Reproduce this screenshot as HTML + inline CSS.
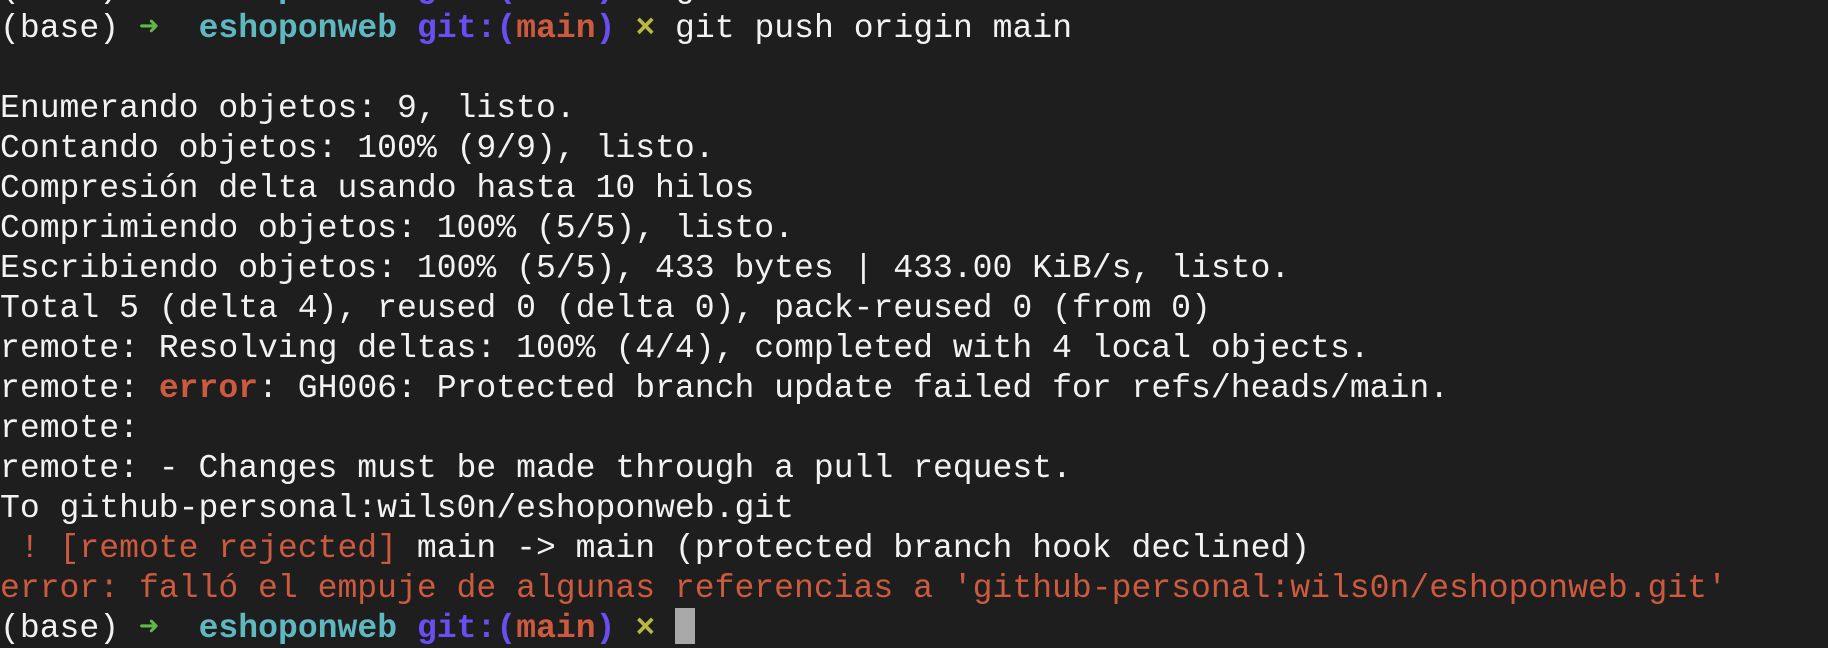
<!DOCTYPE html>
<html><head><meta charset="utf-8"><style>
html,body{margin:0;padding:0;background:#1e1e1e;width:1828px;height:620px;overflow:hidden}
pre{margin:0;position:absolute;left:0;top:-32px;font-family:"Liberation Mono","DejaVu Sans Mono",monospace;font-size:33.1px;line-height:40px;color:#f2f2f2;white-space:pre}
.c{color:#5fb8c0;font-weight:bold}.p{color:#6b4ef2;font-weight:bold}.r{color:#cb5a3f}.rb{color:#cb5a3f;font-weight:bold}.y{color:#b9b843;font-weight:bold}.g{color:#5fb847;font-weight:bold}
.cur{display:inline-block;width:20px;height:36px;background:#a8a8a8;vertical-align:-7px}
</style></head><body><pre>(base) <span class="g">➜</span>  <span class="c">eshoponweb</span> <span class="p">git:(</span><span class="rb">main</span><span class="p">)</span> <span class="y">×</span> git add .
(base) <span class="g">➜</span>  <span class="c">eshoponweb</span> <span class="p">git:(</span><span class="rb">main</span><span class="p">)</span> <span class="y">×</span> git push origin main

Enumerando objetos: 9, listo.
Contando objetos: 100% (9/9), listo.
Compresión delta usando hasta 10 hilos
Comprimiendo objetos: 100% (5/5), listo.
Escribiendo objetos: 100% (5/5), 433 bytes | 433.00 KiB/s, listo.
Total 5 (delta 4), reused 0 (delta 0), pack-reused 0 (from 0)
remote: Resolving deltas: 100% (4/4), completed with 4 local objects.
remote: <span class="rb">error</span>: GH006: Protected branch update failed for refs/heads/main.
remote:
remote: - Changes must be made through a pull request.
To github-personal:wils0n/eshoponweb.git
<span class="r"> ! [remote rejected]</span> main -&gt; main (protected branch hook declined)
<span class="r">error: falló el empuje de algunas referencias a 'github-personal:wils0n/eshoponweb.git'</span>
(base) <span class="g">➜</span>  <span class="c">eshoponweb</span> <span class="p">git:(</span><span class="rb">main</span><span class="p">)</span> <span class="y">×</span> <span class="cur"></span>
</pre></body></html>
